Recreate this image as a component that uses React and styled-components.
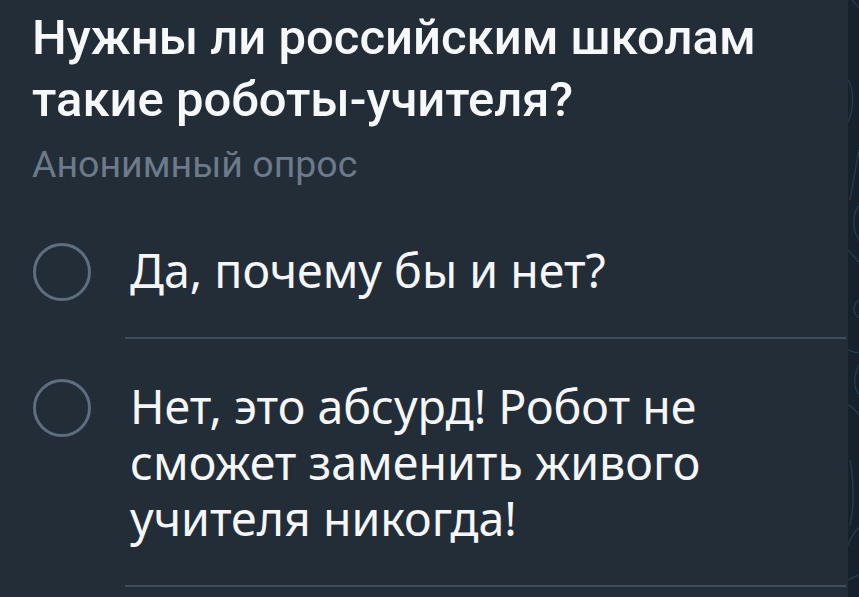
import React from "react";
import styled, { createGlobalStyle } from "styled-components";

const poll = {
  question: "Нужны ли российским школам такие роботы-учителя?",
  kind: "Анонимный опрос",
  answers: [
    "Да, почему бы и нет?",
    "Нет, это абсурд! Робот не сможет заменить живого учителя никогда!"
  ]
};

const GlobalStyle = createGlobalStyle`
  html, body {
    margin: 0;
    padding: 0;
    background: #16212c;
  }
`;

function App() {
  return (
    <Screen>
      <GlobalStyle />
      <Card>
        <Question>{poll.question}</Question>
        <Kind>{poll.kind}</Kind>
        <Answers>
          {poll.answers.map((answer) => (
            <Answer key={answer}>
              <RadioCell>
                <Radio />
              </RadioCell>
              <AnswerBody>
                <AnswerText>{answer}</AnswerText>
              </AnswerBody>
            </Answer>
          ))}
        </Answers>
      </Card>
      <Wallpaper>
        <svg width="11" height="597" viewBox="0 0 11 597" fill="none">
          <g stroke="#26384a" strokeWidth="1.5">
            <path d="M2 -4 C 6 4, 10 6, 11 8" />
            <path d="M0 80 C 6 88, 6 110, 0 122" />
            <path d="M11 150 L 2 200" />
            <path d="M11 205 C 4 215, 4 230, 11 240" />
            <path d="M0 250 C 6 255, 8 260, 11 262" />
            <path d="M11 300 C 5 305, 3 312, 11 318" />
            <path d="M0 350 C 6 352, 9 354, 11 352" />
            <path d="M11 365 C 6 375, 4 385, 11 395" />
            <path d="M0 405 C 6 408, 9 412, 11 415" />
            <path d="M2 460 C 6 480, 6 510, 2 525" />
            <path d="M0 545 C 4 535, 8 530, 11 528" />
            <path d="M0 580 C 4 578, 8 576, 11 575" />
          </g>
        </svg>
      </Wallpaper>
    </Screen>
  );
}

const Screen = styled.div`
  display: flex;
  width: 859px;
  height: 597px;
  overflow: hidden;
`;

const Card = styled.div`
  flex: 1;
  background: #232d38;
  padding: 7px 0 0 32px;
  box-sizing: border-box;
  color: #ffffff;
`;

const Question = styled.div`
  font-family: Roboto, "Noto Sans", sans-serif;
  font-weight: 500;
  font-size: 49px;
  line-height: 62px;
  color: #f7f8f9;
`;

const Kind = styled.div`
  margin-top: 11px;
  font-family: Roboto, "Noto Sans", sans-serif;
  font-size: 37.5px;
  line-height: 44px;
  color: #6c7a89;
`;

const Answers = styled.div`
  margin-top: 56px;
  display: flex;
  flex-direction: column;
  gap: 39px;
`;

const Answer = styled.div`
  display: flex;
  align-items: flex-start;
`;

const RadioCell = styled.div`
  width: 93px;
  padding-top: 1px;
  display: flex;
  flex-shrink: 0;
`;

const Radio = styled.span`
  width: 52px;
  height: 52px;
  margin-left: 1px;
  border: 3px solid #5d6e7f;
  border-radius: 50%;
`;

const AnswerBody = styled.div`
  flex: 1;
  margin-right: 2px;
  padding: 0 0 39px 5px;
  border-bottom: 2px solid #3f4d5b;
`;

const AnswerText = styled.div`
  font-family: "Noto Sans", Roboto, sans-serif;
  font-size: 46.5px;
  line-height: 56px;
  color: #f4f6f8;
`;

const Wallpaper = styled.div`
  width: 11px;
  flex-shrink: 0;
  background: #16212c;
  line-height: 0;
`;

export default App;
